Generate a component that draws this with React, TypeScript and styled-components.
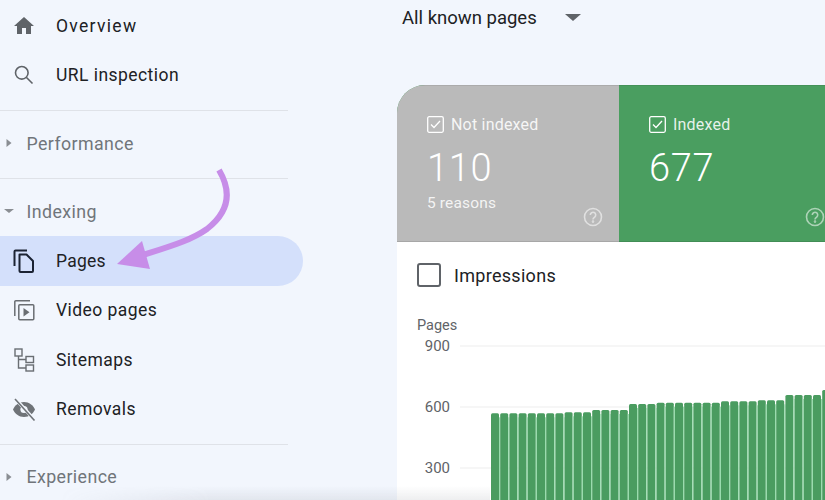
import React from "react";
import styled, { createGlobalStyle } from "styled-components";

const GlobalStyle = createGlobalStyle`
  html, body {
    margin: 0;
    padding: 0;
    background: #f2f6fd;
  }
`;

const Page = styled.div`
  position: relative;
  display: flex;
  width: 825px;
  height: 500px;
  overflow: hidden;
  background: #f2f6fd;
  font-family: "Roboto", "Liberation Sans", sans-serif;
`;

const Sidebar = styled.nav`
  width: 397px;
  flex: none;
  padding-top: 1px;
  box-sizing: border-box;
`;

const NavRow = styled.div<{ $active?: boolean; $tracking?: string }>`
  display: flex;
  align-items: center;
  width: 303px;
  height: 49.4px;
  padding-left: 12px;
  gap: 20px;
  box-sizing: border-box;
  background: ${(p) => (p.$active ? "#d4e0fb" : "transparent")};
  border-radius: 0 25px 25px 0;
  color: #202124;
  font-size: 17.5px;
  letter-spacing: ${(p) => p.$tracking || "0.45px"};
  svg {
    flex: none;
  }
`;

const Divider = styled.div<{ $flush?: boolean }>`
  width: 288px;
  height: 1px;
  background: #dfe2e8;
  margin-top: ${(p) => (p.$flush ? "0" : "10px")};
`;

const SectionHead = styled.div<{ $tall?: boolean }>`
  display: flex;
  align-items: center;
  height: ${(p) => (p.$tall ? "57px" : "67.5px")};
  padding: ${(p) => (p.$tall ? "7px 0 0 4px" : "0 0 3px 4px")};
  box-sizing: border-box;
  gap: 12.5px;
  color: #70757a;
  font-size: 17.8px;
  letter-spacing: 0.4px;
  svg {
    flex: none;
  }
`;

const Main = styled.main`
  flex: 1;
  min-width: 0;
`;

const SelectRow = styled.div`
  display: flex;
  align-items: center;
  height: 35px;
  margin-bottom: 50px;
  padding-left: 5px;
  gap: 28px;
  color: #202124;
  font-size: 18.5px;
`;

const Caret = styled.span`
  width: 0;
  height: 0;
  border-left: 8px solid transparent;
  border-right: 8px solid transparent;
  border-top: 7px solid #5f6368;
`;

const Card = styled.section`
  height: 415px;
  background: #fff;
  border-top-left-radius: 28px;
  overflow: hidden;
`;

const Tiles = styled.div`
  display: flex;
  width: 450px;
  background: #4a9e60;
`;

const Tile = styled.div<{ $tone: "grey" | "green" }>`
  position: relative;
  width: 222px;
  height: 157px;
  padding: 29px 0 0 30px;
  box-sizing: border-box;
  background: ${(p) => (p.$tone === "grey" ? "#bababa" : "#4a9e60")};
  color: #fff;
  box-shadow: inset 0 1px 0 rgba(0, 0, 0, 0.08), inset 0 -1px 0 rgba(0, 0, 0, 0.1);
`;

const TileLabel = styled.div`
  display: flex;
  align-items: center;
  gap: 7px;
  height: 20px;
  font-size: 16px;
  letter-spacing: 0.2px;
  color: rgba(255, 255, 255, 0.88);
`;

const TileCheck = styled.svg`
  width: 17px;
  height: 17px;
  flex: none;
`;

const TileValue = styled.div`
  margin-top: 12px;
  font-size: 38px;
  line-height: 44px;
  font-weight: 300;
  letter-spacing: 0.7px;
`;

const TileNote = styled.div`
  margin-top: 4px;
  font-size: 15.5px;
  line-height: 18px;
  letter-spacing: 0.15px;
  color: rgba(255, 255, 255, 0.85);
`;

const HelpIcon = styled.svg`
  position: absolute;
  right: 16px;
  bottom: 15px;
  width: 20px;
  height: 20px;
`;

const CardBody = styled.div`
  padding: 21px 0 0 20px;
`;

const MetricRow = styled.div`
  display: flex;
  align-items: center;
  gap: 13px;
  height: 24px;
  color: #202124;
  font-size: 18px;
  letter-spacing: 0.3px;
`;

const MetricBox = styled.span`
  width: 24px;
  height: 24px;
  box-sizing: border-box;
  border: 2px solid #5f6368;
  border-radius: 3px;
`;

const AxisTitle = styled.div`
  margin-top: 31px;
  height: 16px;
  line-height: 16px;
  color: #5f6368;
  font-size: 14.5px;
`;

const ChartRow = styled.div`
  display: flex;
  margin-top: 2px;
`;

const YAxis = styled.div`
  display: flex;
  flex-direction: column;
  gap: 41px;
  width: 33px;
  flex: none;
`;

const YLabel = styled.div`
  height: 20px;
  line-height: 20px;
  text-align: right;
  color: #5f6368;
  font-size: 15px;
`;

const Plot = styled.svg`
  display: block;
  width: 365px;
  height: 164px;
  margin-left: 10px;
  flex: none;
`;

const Arrow = styled.svg`
  position: absolute;
  left: 0;
  top: 0;
  width: 310px;
  height: 290px;
  pointer-events: none;
`;

const BottomFade = styled.div`
  position: absolute;
  left: 60px;
  right: 335px;
  bottom: 0;
  height: 14px;
  background: linear-gradient(to bottom, rgba(120, 125, 135, 0), rgba(120, 125, 135, 0.13));
  mask-image: linear-gradient(to right, transparent, #000 35%);
`;

const barTops = [
  ...Array(8).fill(413.3),
  ...Array(3).fill(412.3),
  ...Array(4).fill(410),
  ...Array(3).fill(404),
  ...Array(7).fill(402.7),
  ...Array(4).fill(401.3),
  ...Array(3).fill(400.3),
  ...Array(4).fill(395),
  390,
];

const HomeIcon = () => (
  <svg width="24" height="24" viewBox="0 0 24 24" fill="#5f6368">
    <path d="M10 20v-6h4v6h5v-8h3L12 3 2 12h3v8z" />
  </svg>
);

const SearchIcon = () => (
  <svg width="24" height="24" viewBox="0 0 24 24" fill="none" stroke="#5f6368" strokeWidth="1.6">
    <circle cx="9.800" cy="9.800" r="6.300" />
    <path d="M14.500 14.500l6 6" />
  </svg>
);

const PagesIcon = () => (
  <svg width="24" height="26" viewBox="0 0 24 26" fill="none" stroke="#1b2333" strokeWidth="2">
    <path d="M2.500 18V3.500a1 1 0 0 1 1-1H15" />
    <path d="M7.500 6.500h7l6.500 6.500v10a1 1 0 0 1-1 1H8.500a1 1 0 0 1-1-1z" strokeLinejoin="round" />
  </svg>
);

const VideoIcon = () => (
  <svg width="24" height="24" viewBox="0 0 24 24" fill="none" stroke="#6a6e73" strokeWidth="1.5">
    <path d="M2.800 18V3.800a1 1 0 0 1 1-1H18" />
    <rect x="6.800" y="6.800" width="15" height="15" rx="1" />
    <path d="M11.500 10l6 4.300-6 4.300z" fill="#6a6e73" stroke="none" />
  </svg>
);

const SitemapIcon = () => (
  <svg width="24" height="24" viewBox="0 0 24 24" fill="none" stroke="#6a6e73" strokeWidth="1.4">
    <rect x="3" y="1" width="7" height="7" />
    <rect x="14" y="8.500" width="7.500" height="6" />
    <rect x="14" y="17" width="7.500" height="6" />
    <path d="M6.500 8v12h7.500M6.500 11.500h7.500" />
  </svg>
);

const RemovalsIcon = () => (
  <svg width="24" height="24" viewBox="0 0 24 24">
    <path
      d="M12 5C6.800 5 2.900 8.200 1 12.500 2.900 16.800 6.800 20 12 20s9.100-3.200 11-7.500C21.100 8.200 17.200 5 12 5z"
      fill="#6f7378"
    />
    <circle cx="12" cy="12.500" r="3.600" fill="#f2f6fd" />
    <path d="M3.500 1.800l19 21" stroke="#f2f6fd" strokeWidth="3.400" />
    <path d="M3 2l19.500 21.500" stroke="#6f7378" strokeWidth="1.600" />
  </svg>
);

const CaretRight = () => (
  <svg width="10" height="12" viewBox="0 0 10 12" fill="#8a8e93">
    <path d="M2.500 2l5 4-5 4z" />
  </svg>
);

const CaretDown = () => (
  <svg width="10" height="12" viewBox="0 0 10 12" fill="#8a8e93">
    <path d="M0 4h10L5 8z" />
  </svg>
);

const Check = () => (
  <TileCheck viewBox="0 0 17 17" fill="none" stroke="#fff" strokeWidth="1.300">
    <rect x="0.700" y="0.700" width="15.600" height="15.600" rx="1.500" />
    <path d="M4 8.500l3 3 6-6.500" />
  </TileCheck>
);

const Help = () => (
  <HelpIcon viewBox="0 0 20 20" fill="none" stroke="rgba(255,255,255,0.55)" strokeWidth="1.600">
    <circle cx="10" cy="10" r="8.500" />
    <path d="M7.300 8a2.700 2.700 0 1 1 4.400 2.100c-1 .8-1.700 1.200-1.700 2.400" />
    <circle cx="10" cy="14.600" r="0.500" />
  </HelpIcon>
);

const App = () => {
  return (
    <>
      <GlobalStyle />
      <Page>
        <Sidebar>
          <NavRow $tracking="1.3px">
            <HomeIcon />
            Overview
          </NavRow>
          <NavRow>
            <SearchIcon />
            URL inspection
          </NavRow>
          <Divider />
          <SectionHead>
            <CaretRight />
            Performance
          </SectionHead>
          <Divider $flush />
          <SectionHead $tall>
            <CaretDown />
            Indexing
          </SectionHead>
          <NavRow $active $tracking="0.25px">
            <PagesIcon />
            Pages
          </NavRow>
          <NavRow>
            <VideoIcon />
            Video pages
          </NavRow>
          <NavRow>
            <SitemapIcon />
            Sitemaps
          </NavRow>
          <NavRow>
            <RemovalsIcon />
            Removals
          </NavRow>
          <Divider />
          <SectionHead $tall>
            <CaretRight />
            Experience
          </SectionHead>
        </Sidebar>
        <Main>
          <SelectRow>
            All known pages
            <Caret />
          </SelectRow>
          <Card>
            <Tiles>
              <Tile $tone="grey">
                <TileLabel>
                  <Check />
                  Not indexed
                </TileLabel>
                <TileValue>110</TileValue>
                <TileNote>5 reasons</TileNote>
                <Help />
              </Tile>
              <Tile $tone="green">
                <TileLabel>
                  <Check />
                  Indexed
                </TileLabel>
                <TileValue>677</TileValue>
                <Help />
              </Tile>
            </Tiles>
            <CardBody>
              <MetricRow>
                <MetricBox />
                Impressions
              </MetricRow>
              <AxisTitle>Pages</AxisTitle>
              <ChartRow>
                <YAxis>
                  <YLabel>900</YLabel>
                  <YLabel>600</YLabel>
                  <YLabel>300</YLabel>
                </YAxis>
                <Plot viewBox="0 0 365 164">
                  {[10, 71, 132].map((y) => (
                    <rect key={y} x="0" y={y - 0.5} width="365" height="1" fill="#eeeeee" />
                  ))}
                  {barTops.map((top, i) => (
                    <g key={i}>
                      <rect x={31 + i * 9.2} y={top - 336} width="8" height={510 - top} rx="1.500" fill="#4a9c60" />
                      <rect x={39 + i * 9.2} y={top - 332} width="1.200" height={510 - top} fill="#9adcae" />
                    </g>
                  ))}
                </Plot>
              </ChartRow>
            </CardBody>
          </Card>
        </Main>
        <BottomFade />
        <Arrow viewBox="0 0 310 290">
          <path d="M219 170C232 192 229 212 207 229C190 241 168 247 140 256" fill="none" stroke="#c78de8" strokeWidth="6" />
          <path d="M117 264L142 241L150 269z" fill="#c78de8" />
        </Arrow>
      </Page>
    </>
  );
};

export default App;
